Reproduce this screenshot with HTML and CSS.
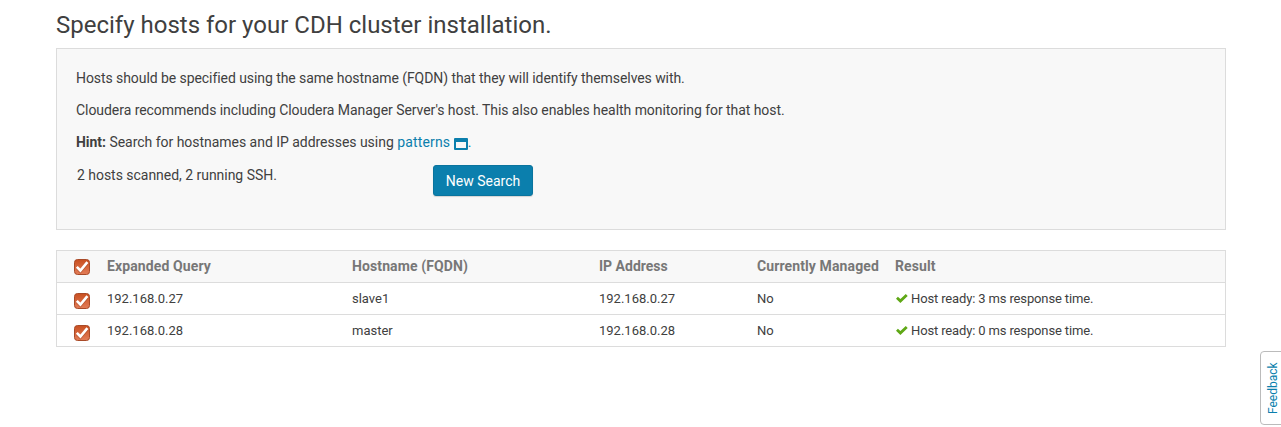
FILE: index.html
```html
<!DOCTYPE html>
<html lang="en">
<head>
<meta charset="utf-8">
<title>Specify hosts</title>
<link rel="stylesheet" href="styles.css">
</head>
<body>
<svg class="defs" width="0" height="0" aria-hidden="true">
  <defs>
    <linearGradient id="box-fill" x1="0" y1="0" x2="0" y2="1">
      <stop offset="0" stop-color="#c84f20"/>
      <stop offset="1" stop-color="#e37d58"/>
    </linearGradient>
    <symbol id="checkbox" viewBox="0 0 16 16">
      <rect x=".5" y=".5" width="15" height="15" rx="3" fill="url(#box-fill)" stroke="#a84a28"/>
      <path d="M3 8.8 6.4 12.4 13.2 4.4" fill="none" stroke="#803010" stroke-opacity=".35" stroke-width="3"/>
      <path d="M2.8 7.8 6.4 11.5 13.4 3.2" fill="none" stroke="#fff" stroke-width="2.6"/>
    </symbol>
    <symbol id="tick" viewBox="0 0 12 9">
      <path d="M0 4.8 1.9 2.8 4.4 5.1 9.8 0 11.7 1.9 4.4 9Z" fill="#5fa816"/>
    </symbol>
  </defs>
</svg>
<main class="page">
  <h1 class="title">Specify hosts for your CDH cluster installation.</h1>
  <section class="well">
    <p class="note naming">Hosts should be specified using the same hostname (FQDN) that they will identify themselves with.</p>
    <p class="note advice">Cloudera recommends including Cloudera Manager Server's host. This also enables health monitoring for that host.</p>
    <p class="note hint"><b>Hint:</b> Search for hostnames and IP addresses using <a class="link patterns" href="#">patterns <svg class="window-icon" viewBox="0 0 14 12"><path fill-rule="evenodd" d="M1 0H13Q14 0 14 1V11Q14 12 13 12H1Q0 12 0 11V1Q0 0 1 0ZM2 4V10H12V4Z" fill="#0b7fad"/></svg></a><span class="link">.</span></p>
    <div class="scan">
      <span class="scan-status">2 hosts scanned, 2 running SSH.</span>
      <button class="button" type="button">New Search</button>
    </div>
  </section>
  <section class="hosts">
    <div class="row head">
      <svg class="checkbox"><use href="#checkbox"/></svg>
      <span>Expanded Query</span><span>Hostname (FQDN)</span><span class="address">IP Address</span><span>Currently Managed</span><span>Result</span>
    </div>
    <div class="row">
      <svg class="checkbox"><use href="#checkbox"/></svg>
      <span>192.168.0.27</span><span>slave1</span><span>192.168.0.27</span><span>No</span>
      <span class="result"><svg class="tick"><use href="#tick"/></svg>Host ready: 3 ms response time.</span>
    </div>
    <div class="row">
      <svg class="checkbox"><use href="#checkbox"/></svg>
      <span>192.168.0.28</span><span>master</span><span>192.168.0.28</span><span>No</span>
      <span class="result"><svg class="tick"><use href="#tick"/></svg>Host ready: 0 ms response time.</span>
    </div>
  </section>
</main>
<a class="feedback" href="#">Feedback</a>
</body>
</html>
```
FILE: styles.css
```css
* { box-sizing: border-box; }
body {
  margin: 0;
  height: 427px;
  overflow: hidden;
  background: #fff;
  color: #404040;
  font: 14px/20px Roboto, "Liberation Sans", sans-serif;
}
.defs { position: absolute; }
.page { width: 1170px; margin-left: 56px; }
.title {
  margin: 0;
  padding-top: 5px;
  height: 48px;
  font-size: 24px;
  line-height: 40px;
  font-weight: 400;
}
.well {
  height: 182px;
  padding: 19px;
  border: 1px solid #dcdcdc;
  background: #f8f8f8;
}
.note { margin: 0 0 12px; }
.naming { letter-spacing: -.068px; }
.advice { letter-spacing: -.05px; }
.hint { letter-spacing: -.03px; }
.link { color: #0b7fad; text-decoration: none; }
.patterns { letter-spacing: .15px; }
.window-icon { width: 14px; height: 12px; vertical-align: -3px; }
.scan { display: flex; align-items: flex-start; }
.scan-status { width: 357px; padding: 1px 0 0 1px; letter-spacing: -.03px; }
.button {
  width: 100px;
  height: 31px;
  margin-top: 1px;
  padding: 1px 0 0;
  border: 1px solid #0a749e;
  border-radius: 3px;
  background: #0b7fad;
  box-shadow: 0 1px 1px rgba(0, 0, 0, .15);
  color: #fff;
  font: inherit;
}
.hosts { margin-top: 20px; border: 1px solid #dcdcdc; }
.row {
  display: grid;
  grid-template-columns: 33px 245px 247px 158px 138px 1fr;
  align-items: center;
  height: 32px;
  padding-left: 17px;
  font-size: 13px;
}
.row + .row { border-top: 1px solid #dcdcdc; }
.head {
  height: 31px;
  padding-bottom: 1px;
  background: #f8f8f8;
  color: #777;
  font-size: 14px;
  font-weight: 700;
  letter-spacing: .11px;
}
.address { letter-spacing: 0; }
.checkbox { width: 16px; height: 16px; margin-top: 5px; }
.head .checkbox { margin-top: 2px; }
.result { display: flex; align-items: center; letter-spacing: -.14px; }
.tick { width: 12px; height: 9px; margin: 0 3px 0 1px; }
.feedback {
  position: absolute;
  right: -1px;
  top: 351px;
  width: 22px;
  height: 74px;
  border: 1px solid #bbb;
  border-radius: 0 4px 4px 0;
  background: #fff;
  color: #0b7fad;
  font-size: 12px;
  line-height: 16px;
  text-align: center;
  text-decoration: none;
  writing-mode: vertical-lr;
  transform: rotate(180deg);
}
```
